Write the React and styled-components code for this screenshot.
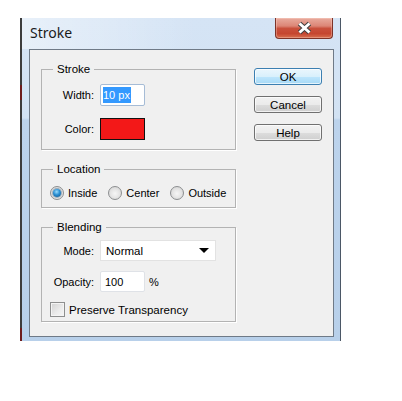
import React from 'react';
import styled, { createGlobalStyle } from 'styled-components';

const Global = createGlobalStyle`
  html, body { margin: 0; padding: 0; background: #fff; }
  body {
    font-family: "Liberation Sans", Arial, sans-serif;
    font-size: 11px;
    color: #000;
  }
`;

const Page = styled.div`
  padding: 18px 0 0 20px;
`;

const Shell = styled.div`
  width: 321px;
  box-sizing: border-box;
  padding-left: 2px;
  background: linear-gradient(
    to bottom,
    #3d3d3d 0, #3d3d3d 67px,
    #6e1c1c 67px, #6e1c1c 82px,
    #3d3d3d 82px, #3d3d3d 310px,
    #6e1c1c 310px
  );
`;

const Window = styled.div`
  display: flex;
  flex-direction: column;
  border-right: 1px solid #4b5766;
  padding: 0 6px 4px 7px;
  background:
    linear-gradient(to right, rgba(255, 255, 255, 0.45), rgba(255, 255, 255, 0) 55%) top / 100% 31px no-repeat,
    linear-gradient(to bottom, #d5e4f5 0, #d2e2f3 100px, #bcd3ec 102px, #b8d0ea 100%);
`;

const TitleBar = styled.div`
  height: 31px;
  display: flex;
  justify-content: space-between;
  align-items: flex-start;
`;

const Title = styled.div`
  font-family: "Noto Sans", "Open Sans", sans-serif;
  font-size: 14px;
  line-height: 19px;
  padding: 5px 0 0 1px;
  color: #1a1a1a;
`;

const CloseButton = styled.div`
  width: 58px;
  height: 21px;
  box-sizing: border-box;
  margin-right: 1px;
  border: 1px solid #7d3328;
  border-top: none;
  border-radius: 0 0 4px 4px;
  background: linear-gradient(
    to bottom,
    #e8ab9e 0%, #dc8676 40%, #c9503c 52%, #c54630 78%, #d8704f 100%
  );
  box-shadow: inset 0 0 0 1px rgba(255, 220, 210, 0.35);
  display: flex;
  align-items: center;
  justify-content: center;
`;

const Body = styled.div`
  height: 288px;
  box-sizing: border-box;
  border: 1px solid #6f7a87;
  background: #f0f0f0;
  display: flex;
  gap: 18px;
  padding: 12px 11px 0 11px;
`;

const Groups = styled.div`
  width: 195px;
  display: flex;
  flex-direction: column;
  gap: 12px;
`;

const Group = styled.fieldset`
  margin: 0;
  padding: 0;
  min-width: 0;
  width: 195px;
  box-sizing: border-box;
  border: 1px solid #b3b3b3;
  box-shadow: 1px 1px 0 #fff;
`;

const Legend = styled.legend`
  margin-left: 11px;
  padding: 0 4px;
  line-height: 14px;
  font-size: 11.5px;
`;

const FormGrid = styled.div`
  display: grid;
  grid-template-columns: 52px auto;
  column-gap: 6px;
  row-gap: ${p => p.$rowGap}px;
  align-items: center;
  justify-items: start;
  padding: ${p => p.$pad};
`;

const Label = styled.span`
  justify-self: end;
  white-space: nowrap;
`;

const TextBox = styled.div`
  width: ${p => p.$w}px;
  height: ${p => p.$h}px;
  box-sizing: border-box;
  border: 1px solid ${p => (p.$focused ? '#a6bcd6' : '#dfe2e7')};
  border-radius: 2px;
  background: #fff;
  padding-left: 2px;
  display: flex;
  align-items: center;
`;

const Selected = styled.span`
  background: #3399ff;
  color: #fff;
  line-height: 16px;
  padding-right: 1px;
`;

const PlainText = styled.span`
  padding-left: ${p => p.$pl || 0}px;
`;

const Swatch = styled.div`
  width: 45px;
  height: 22px;
  box-sizing: border-box;
  border: 1px solid #111;
  background: #f31818;
`;

const RadioRow = styled.div`
  display: flex;
  align-items: center;
  gap: 11px;
  padding: 9px 0 6px 8px;
  height: 16px;
  box-sizing: content-box;
`;

const Option = styled.label`
  display: flex;
  align-items: center;
  gap: 4px;
`;

const Radio = styled.span`
  width: 14px;
  height: 14px;
  box-sizing: border-box;
  border-radius: 50%;
  border: 1px solid #8c8e90;
  background: radial-gradient(circle at 50% 55%, #f6f6f6 0, #e6e6e6 45%, #cfcfcf 100%);
  display: flex;
  align-items: center;
  justify-content: center;
  &::after {
    content: '';
    display: ${p => (p.$checked ? 'block' : 'none')};
    width: 8px;
    height: 8px;
    border-radius: 50%;
    background: radial-gradient(circle at 45% 35%, #9bdcfc 0, #2a8fd3 45%, #0d4f82 100%);
    box-shadow: 0 0 0 1px rgba(20, 70, 110, 0.35);
  }
`;

const Inline = styled.div`
  display: flex;
  align-items: center;
  gap: 4px;
`;

const SelectBox = styled.div`
  width: 116px;
  height: 21px;
  box-sizing: border-box;
  border: 1px solid #e2e2e2;
  background: #fff;
  display: flex;
  align-items: center;
  justify-content: space-between;
  padding: 0 6px 0 5px;
  font-size: 11.5px;
`;

const Arrow = styled.span`
  width: 0;
  height: 0;
  border-left: 5px solid transparent;
  border-right: 5px solid transparent;
  border-top: 5px solid #000;
`;

const CheckRow = styled.label`
  grid-column: 1 / -1;
  display: flex;
  align-items: center;
  gap: 4px;
  padding-left: 8px;
  font-size: 11.5px;
`;

const Check = styled.span`
  width: 15px;
  height: 15px;
  box-sizing: border-box;
  border: 1px solid #8e8f8f;
  background: linear-gradient(135deg, #d2d2d2 0%, #ececec 60%, #f6f6f6 100%);
  box-shadow: inset 0 0 0 1px #f4f4f4;
`;

const Buttons = styled.div`
  width: 68px;
  margin-top: 6px;
  display: flex;
  flex-direction: column;
  gap: 11px;
`;

const Button = styled.button`
  width: 68px;
  height: 17px;
  box-sizing: border-box;
  margin: 0;
  padding: 0;
  font-family: "Liberation Sans", Arial, sans-serif;
  font-size: 11.5px;
  color: #000;
  border-radius: 3px;
  border: 1px solid ${p => (p.$primary ? '#3c7fb1' : '#707070')};
  background: ${p =>
    p.$primary
      ? 'linear-gradient(to bottom, #eaf6fd 0%, #d9f0fc 50%, #bee6fd 51%, #a7d9f5 100%)'
      : 'linear-gradient(to bottom, #f2f2f2 0%, #ebebeb 50%, #dddddd 51%, #cfcfcf 100%)'};
  box-shadow: inset 0 0 0 1px rgba(255, 255, 255, 0.7);
  display: flex;
  align-items: center;
  justify-content: center;
`;

export default function App() {
  return (
    <>
      <Global />
      <Page>
        <Shell>
          <Window>
            <TitleBar>
              <Title>Stroke</Title>
              <CloseButton>
                <svg width="17" height="14" viewBox="0 0 17 14">
                  <path d="M3.5 2.5 L13.5 11.5 M13.5 2.5 L3.5 11.5" stroke="#404040" strokeWidth="5" fill="none" />
                  <path d="M3.5 2.5 L13.5 11.5 M13.5 2.5 L3.5 11.5" stroke="#ffffff" strokeWidth="3" fill="none" />
                </svg>
              </CloseButton>
            </TitleBar>
            <Body>
              <Groups>
                <Group>
                  <Legend>Stroke</Legend>
                  <FormGrid $rowGap={12} $pad="8px 0 9px 0">
                    <Label>Width:</Label>
                    <TextBox $w={45} $h={22} $focused>
                      <Selected>10 px</Selected>
                    </TextBox>
                    <Label>Color:</Label>
                    <Swatch />
                  </FormGrid>
                </Group>
                <Group>
                  <Legend>Location</Legend>
                  <RadioRow>
                    <Option><Radio $checked />Inside</Option>
                    <Option><Radio />Center</Option>
                    <Option><Radio />Outside</Option>
                  </RadioRow>
                </Group>
                <Group>
                  <Legend>Blending</Legend>
                  <FormGrid $rowGap={10} $pad="6px 0 4px 0">
                    <Label>Mode:</Label>
                    <SelectBox>
                      <span>Normal</span>
                      <Arrow />
                    </SelectBox>
                    <Label>Opacity:</Label>
                    <Inline>
                      <TextBox $w={45} $h={21}>
                        <PlainText $pl={2}>100</PlainText>
                      </TextBox>
                      <span>%</span>
                    </Inline>
                    <CheckRow>
                      <Check />
                      Preserve Transparency
                    </CheckRow>
                  </FormGrid>
                </Group>
              </Groups>
              <Buttons>
                <Button $primary>OK</Button>
                <Button>Cancel</Button>
                <Button>Help</Button>
              </Buttons>
            </Body>
          </Window>
        </Shell>
      </Page>
    </>
  );
}
